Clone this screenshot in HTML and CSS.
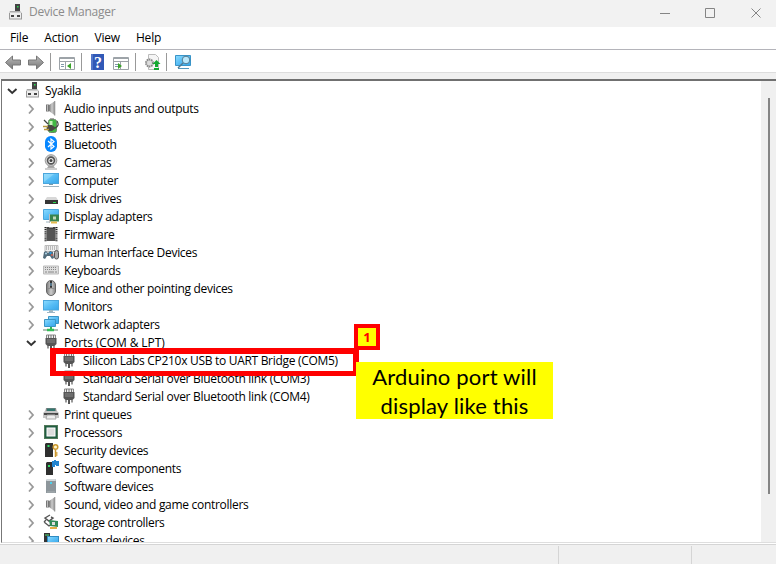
FILE: index.html
```html
<!DOCTYPE html>
<html lang="en">
<head>
<meta charset="utf-8">
<title>Device Manager</title>
<link rel="stylesheet" href="styles.css">
</head>
<body>
<svg class="defs" width="0" height="0" aria-hidden="true">
<defs>
<linearGradient id="blue" x1="0" y1="0" x2="1" y2="1"><stop offset="0" stop-color="#8edcff"/><stop offset=".5" stop-color="#57bdf5"/><stop offset="1" stop-color="#36a6ea"/></linearGradient>
<linearGradient id="metal" x1="0" x2="1"><stop offset="0" stop-color="#777"/><stop offset=".5" stop-color="#ccc"/><stop offset="1" stop-color="#888"/></linearGradient>
<linearGradient id="gray" x1="0" y1="0" x2="0" y2="1"><stop offset="0" stop-color="#bbb"/><stop offset="1" stop-color="#777"/></linearGradient>
<symbol id="right" viewBox="0 0 16 16"><path d="M6 4.500l4 4.500-4 4.500" fill="none" stroke="#999" stroke-width="1.8"/></symbol>
<symbol id="down" viewBox="0 0 16 16"><path d="M4 7l4.200 4L12.500 7" fill="none" stroke="#333" stroke-width="1.900"/></symbol>
<symbol id="pc" viewBox="0 0 16 16"><path d="M8 0h5v9H8z" fill="#444"/><path d="M10 2h1.500v1.500H10z" fill="#2ddb52"/><path d="M3 7h10l2 2H2z" fill="#aaa"/><path d="M2 8.500h13v6.500H2z" fill="#eee"/><path d="M2 15h13M2.500 9v6M14.500 9v6" stroke="#999"/><path d="M4 11h3v2H4zM10 11h3v2h-3z" fill="#444"/></symbol>
<symbol id="sound" viewBox="0 0 16 16"><path d="M3 4.500h3v7H3z" fill="#777"/><path d="M6 5L12 1v14.500L6 11z" fill="url(#metal)"/><path d="M11.800 1v14.500" stroke="#999"/><path d="M4.500 5v6" stroke="#bbb"/></symbol>
<symbol id="battery" viewBox="0 0 16 16"><path d="M7 0h4v2H7z" fill="#aaa"/><rect x="5.500" y="1.500" width="8" height="13" rx="2" fill="#42b944" stroke="#688b65"/><path d="M6.500 3h3v5h-3z" fill="#c9f3bc"/><path d="M1 2l4 4M12 10q5-2 2-7" fill="none" stroke="#3f463f" stroke-width="1.200"/><path d="M5 7h4l4 3-4 3H6c-3 0-3-4-1-6z" fill="#4a4a45"/><path d="M0 8.500h5M1 11.500h5" stroke="#b99a3c" stroke-width="1.400"/></symbol>
<symbol id="bluetooth" viewBox="0 0 16 16"><rect x="2" y="0" width="12" height="16" rx="5.800" fill="#0787ff"/><path d="M5 5l6 5.500L8 13V3l3 2.500L5 11" fill="none" stroke="#fff" stroke-width="1.200"/></symbol>
<symbol id="camera" viewBox="0 0 16 16"><path d="M4 14l2-3h4l2 3z" fill="#aaa"/><path d="M2 15h12" stroke="#999"/><circle cx="8" cy="6.500" r="5.800" fill="#ccc" stroke="#999"/><circle cx="8" cy="6.500" r="3.400" fill="#eee" stroke="#555" stroke-width="1.600"/><circle cx="8" cy="6.500" r="1.500" fill="#444"/></symbol>
<symbol id="computer" viewBox="0 0 16 16"><rect x=".5" y="1.500" width="15" height="10" fill="url(#blue)" stroke="#4ba6dc"/><path d="M1 10L11 2H1z" fill="#a4e2fc" opacity=".5"/><path d="M6 12h4v1H6z" fill="#7699aa"/><path d="M0 14.500h16" stroke="#9eb4c0"/></symbol>
<symbol id="disk" viewBox="0 0 16 16"><path d="M4 7h9l2 3H2z" fill="#d8d8d8"/><path d="M2 10h13v4H2z" fill="#363636"/><path d="M10 12.500h3" stroke="#27d94f"/></symbol>
<symbol id="display" viewBox="0 0 16 16"><path d="M.5 1.500h15v10H.5z" fill="url(#blue)" stroke="#4ba6dc"/><path d="M3 14h4" stroke="#9eb4c0"/><path d="M7 6.500h9v7H7z" fill="#39844e"/><path d="M10 8.500h3v3h-3z" fill="#c1d7b8"/><path d="M8 14.500h6" stroke="#e4ba4d" stroke-width="2"/><path d="M6.500 6v9" stroke="#bbb"/></symbol>
<symbol id="firmware" viewBox="0 0 16 16"><path d="M3.500 1h9v14h-9z" fill="#555"/><path d="M6 0h4v2H6z" fill="#fff"/><path d="M4 2h8" stroke="#333"/><path d="M2.500 1v15M13.500 1v15" stroke="#222" stroke-width="2" stroke-dasharray="1.200 .9"/></symbol>
<symbol id="hid" viewBox="0 0 16 16"><path d="M2 1.500h13v6H2z" fill="#eee" stroke="#bbb"/><path d="M3 3h11M3 5h11" stroke="#888" stroke-dasharray="1 1"/><path d="M0 14l1-6 2-1 2 2 2-2 3 1 1 6-2 1-2-3H4l-2 3z" fill="#526c7c"/><circle cx="3" cy="9.500" r="1" fill="#b5dbed"/><circle cx="7.500" cy="9" r="1" fill="#299eee"/><circle cx="9" cy="11" r="1" fill="#db6450"/><rect x="11.500" y="6.500" width="4" height="8.500" rx="2" fill="#aaa" stroke="#555"/></symbol>
<symbol id="keyboard" viewBox="0 0 16 16"><path d="M.5 4h15v8H.5z" fill="#ddd" stroke="#bbb"/><path d="M2 5.500h12M2 7.500h12" stroke="#888" stroke-dasharray="1 1"/><path d="M2 10h2m1 0h6m1 0h2" stroke="#888"/></symbol>
<symbol id="mouse" viewBox="0 0 16 16"><rect x="3.500" y=".5" width="9" height="15" rx="4.500" fill="url(#metal)" stroke="#666"/><path d="M8 1v7" stroke="#333" stroke-width="2"/><path d="M8 3v3" stroke="#76b7df"/><path d="M4 9q4-2 8 0" fill="none" stroke="#888"/></symbol>
<symbol id="monitor" viewBox="0 0 16 16"><rect x=".5" y="2.500" width="15" height="9.500" fill="url(#blue)" stroke="#4ba6dc"/><path d="M6 12h4v2H6z" fill="#9db6c2"/><path d="M4 14.500h8" stroke="#9bb6c6"/></symbol>
<symbol id="network" viewBox="0 0 16 16"><path d="M5.500.5h10v7h-10z" fill="url(#blue)" stroke="#3b95c5"/><path d="M1.500 3.500h11v7h-11z" fill="url(#blue)" stroke="#3b95c5"/><path d="M7 11h2v3H7z" fill="#34b356"/><path d="M0 14h15" stroke="#b0c1b4" stroke-width="2"/><path d="M4 14h7" stroke="#31bd56" stroke-width="2.500"/></symbol>
<symbol id="port" viewBox="0 0 16 16"><path d="M3.500 1h9v4h-9z" fill="#eee" stroke="#888"/><path d="M5.500 1v3M8 1v3M10.500 1v3" stroke="#777"/><path d="M2.500 4h11v6l-2 2h-7l-2-2z" fill="#555"/><path d="M4 6h8M4 8h8" stroke="#888"/><path d="M5 12v2.500M11 12v2.500" stroke="#777" stroke-width="1.500"/><path d="M8 11v5" stroke="#555" stroke-width="2"/></symbol>
<symbol id="printer" viewBox="0 0 16 16"><path d="M3 2h10l1 5H2z" fill="#888"/><path d="M4 2.500h8v3H4z" fill="#33766e"/><path d="M0 7l2-2h12l2 2v5H0z" fill="#c5c5c5"/><path d="M1 7h14v2H1z" fill="#484848"/><path d="M4 9h8l1 4H3z" fill="#eee" stroke="#aaa"/></symbol>
<symbol id="processor" viewBox="0 0 16 16"><rect x="1" y="1" width="14" height="14" fill="#215d42"/><rect x="1.500" y="1.500" width="13" height="13" fill="none" stroke="#829770" stroke-dasharray="1 1"/><rect x="4" y="4" width="8" height="8" fill="#ddd" stroke="#fff"/></symbol>
<symbol id="security" viewBox="0 0 16 16"><path d="M2 2l1-1h7v14H2z" fill="#2f2f2f"/><path d="M4.500 3h2v2h-2z" fill="#32de66"/><circle cx="12.500" cy="5" r="2.300" fill="#fff4c7" stroke="#cc982f" stroke-width="1.500"/><path d="M12.500 8v7M12.500 11h2M12.500 13h2" stroke="#cc982f" stroke-width="1.500"/></symbol>
<symbol id="component" viewBox="0 0 16 16"><path d="M3 3l1-1h6v13H3z" fill="#2f2f2f"/><path d="M5 5h2v2H5z" fill="#32de66"/><path d="M9 1h2V0h2v1h3v5h-3V5h-1v2H9z" fill="#2384cf"/></symbol>
<symbol id="software" viewBox="0 0 16 16"><path d="M3 2l2-1h7l1 1v13H3z" fill="#8d969b"/><path d="M4 1h8l1 2H3z" fill="#d1d7da"/><path d="M7 4h2v2H7z" fill="#4bd2ef"/><path d="M4 14h8" stroke="#aab0b3"/></symbol>
<symbol id="storage" viewBox="0 0 16 16"><path d="M7 1L2 4l4 3 4-3-2-1M1 8l5 4 3-2M1 8l2-2" fill="none" stroke="#555" stroke-width="1.400"/><path d="M6 6l9 1v6l-8-1z" fill="#318957"/><path d="M9 8h3v3H9z" fill="#ddd"/><path d="M7 14h7" stroke="#e2ad45" stroke-width="2"/></symbol>
<symbol id="system" viewBox="0 0 16 16"><path d="M1 1h6v10H1z" fill="#333"/><path d="M2 3h4" stroke="#55df78"/><rect x="4.500" y="4.500" width="11" height="8" fill="url(#blue)" stroke="#308cc2"/></symbol>
</defs>
</svg>
<div class="window">
<header class="titlebar">
<svg class="app-icon"><use href="#pc"/></svg><h1>Device Manager</h1>
<svg class="controls" viewBox="0 0 110 20"><path d="M4 10.500h10M49.500 5.500h9v9h-9zM95.500 5.500l9 9m0-9l-9 9" fill="none" stroke="#858585"/></svg>
</header>
<nav class="menubar"><span>File</span><span>Action</span><span>View</span><span>Help</span></nav>
<div class="toolbar">
<svg viewBox="0 0 200 22">
<path d="M5.500 12.500l7-6.500v4h8v5h-8v4zM43.500 12.500l-7-6.500v4h-8v5h8v4z" fill="url(#gray)" stroke="#777"/>
<path d="M50.500 3v18M81.500 3v18M135.500 3v18M166.500 3v18" stroke="#999"/>
<g fill="#fff" stroke="#9da3a8"><path d="M59.500 7.500h15v12h-15zM113.500 7.500h15v12h-15z"/><path d="M60 8.500h14M60 11.500h14M114 8.500h14M114 11.500h14M65.500 12v8M120.500 12v8"/></g>
<path d="M61 14.500h3m-3 2h3M115 14.500h4m-4 2h4" stroke="#8098aa"/><path d="M71 13v6l-4-3zM118 13v6l4-3z" fill="#39a329"/>
<path d="M91 4h13v16H91z" fill="#3159b7"/><path d="M92 4v16" stroke="#7996d9"/><text x="98" y="17.500" class="help">?</text>
<path d="M148.500 4.500h7l3 3v12h-10z" fill="#f5f5f5" stroke="#bbb"/><circle cx="149.500" cy="13" r="3.500" fill="#ddd" stroke="#888" stroke-width="2" stroke-dasharray="1.500 .7"/><path d="M156.500 10l4 4h-2.500v3h-3v-3h-2.500zM154 18h5v2h-5z" fill="#13a931"/>
<path d="M175.500 5.500h15v10h-15z" fill="url(#blue)" stroke="#3994c8"/><path d="M178 18.500h11" stroke="#5297bd"/><circle cx="186" cy="10" r="3.800" fill="#b9e7fb" stroke="#537b91"/><path d="M183 13l-5 5" stroke="#537b91" stroke-width="1.500"/>
</svg>
</div>
<main class="content">
<ul class="tree">
<li class="root"><svg><use href="#down"/></svg><svg><use href="#pc"/></svg><span>Syakila</span></li>
<li><svg><use href="#right"/></svg><svg><use href="#sound"/></svg><span>Audio inputs and outputs</span></li>
<li><svg><use href="#right"/></svg><svg><use href="#battery"/></svg><span>Batteries</span></li>
<li><svg><use href="#right"/></svg><svg><use href="#bluetooth"/></svg><span>Bluetooth</span></li>
<li><svg><use href="#right"/></svg><svg><use href="#camera"/></svg><span>Cameras</span></li>
<li><svg><use href="#right"/></svg><svg><use href="#computer"/></svg><span>Computer</span></li>
<li><svg><use href="#right"/></svg><svg><use href="#disk"/></svg><span>Disk drives</span></li>
<li><svg><use href="#right"/></svg><svg><use href="#display"/></svg><span>Display adapters</span></li>
<li><svg><use href="#right"/></svg><svg><use href="#firmware"/></svg><span>Firmware</span></li>
<li><svg><use href="#right"/></svg><svg><use href="#hid"/></svg><span>Human Interface Devices</span></li>
<li><svg><use href="#right"/></svg><svg><use href="#keyboard"/></svg><span>Keyboards</span></li>
<li><svg><use href="#right"/></svg><svg><use href="#mouse"/></svg><span>Mice and other pointing devices</span></li>
<li><svg><use href="#right"/></svg><svg><use href="#monitor"/></svg><span>Monitors</span></li>
<li><svg><use href="#right"/></svg><svg><use href="#network"/></svg><span>Network adapters</span></li>
<li class="ports"><svg><use href="#down"/></svg><svg><use href="#port"/></svg><span>Ports (COM &amp; LPT)</span></li>
<li class="leaf"><svg><use href="#port"/></svg><span>Silicon Labs CP210x USB to UART Bridge (COM5)</span></li>
<li class="leaf"><svg><use href="#port"/></svg><span>Standard Serial over Bluetooth link (COM3)</span></li>
<li class="leaf"><svg><use href="#port"/></svg><span>Standard Serial over Bluetooth link (COM4)</span></li>
<li><svg><use href="#right"/></svg><svg><use href="#printer"/></svg><span>Print queues</span></li>
<li><svg><use href="#right"/></svg><svg><use href="#processor"/></svg><span>Processors</span></li>
<li><svg><use href="#right"/></svg><svg><use href="#security"/></svg><span>Security devices</span></li>
<li><svg><use href="#right"/></svg><svg><use href="#component"/></svg><span>Software components</span></li>
<li><svg><use href="#right"/></svg><svg><use href="#software"/></svg><span>Software devices</span></li>
<li><svg><use href="#right"/></svg><svg><use href="#sound"/></svg><span>Sound, video and game controllers</span></li>
<li><svg><use href="#right"/></svg><svg><use href="#storage"/></svg><span>Storage controllers</span></li>
<li><svg><use href="#right"/></svg><svg><use href="#system"/></svg><span>System devices</span></li>
</ul>
<div class="scrollbar"><div class="thumb"></div></div>
</main>
<footer class="statusbar"><span></span><span></span><span></span></footer>
<div class="highlight"></div>
<div class="badge">1</div>
<div class="note"><span>Arduino port will</span><span>display like this</span></div>
</div>
</body>
</html>
```
FILE: styles.css
```css
* { box-sizing: border-box; }
body { margin: 0; font: 12px/18px "Open Sans", "Noto Sans", sans-serif; color: #000; }
svg { display: block; flex: none; }
.defs { position: absolute; }
.window { position: relative; display: flex; flex-direction: column; width: 776px; height: 564px; overflow: hidden; background: #fff; }
.titlebar { display: flex; align-items: center; height: 27px; padding: 0 10px 4px 7px; background: #f2f2f2; color: #8b8b8b; }
.app-icon { width: 16px; height: 16px; margin-right: 6px; }
h1 { flex: 1; margin: 0; font-size: 12px; font-weight: 400; line-height: 23px; letter-spacing: -.23px; }
.controls { width: 110px; height: 20px; margin-top: 2px; }
.menubar { display: flex; gap: 16px; height: 23px; padding: 2px 10px; border-bottom: 1px solid #b4b4ba; letter-spacing: -.18px; }
.toolbar { height: 29px; background: linear-gradient(#fff 0 22px, #ddd 22px 23px, #f0f0f0 23px); }
.toolbar svg { width: 200px; height: 22px; }
.help { font: bold 16px "Liberation Serif", serif; fill: #fff; text-anchor: middle; }
.content { display: flex; height: 465px; border-top: 2px solid #707070; border-left: 1px solid #777; border-bottom: 1px solid #dedede; overflow: hidden; margin-left: 1px; }
.tree { flex: 1; list-style: none; margin: 0; padding: 0; }
.tree li { display: flex; align-items: center; height: 18px; padding-left: 21px; white-space: nowrap; letter-spacing: -.3px; }
.tree li.root { padding-left: 2px; }
.tree li.leaf { padding-left: 59px; }
.tree li.ports { letter-spacing: -.1px; }
.tree svg { width: 16px; height: 16px; }
.tree svg + svg { margin-left: 4px; }
.tree span { margin-left: 5px; padding-top: 2px; line-height: 18px; }
.tree .leaf span { margin-left: 6px; }
.scrollbar { width: 15px; padding: 17px 0 0 7px; background: #f0f0f0; }
.thumb { width: 2px; height: 396px; background: #858585; }
.statusbar { display: flex; height: 20px; margin-top: 1px; border-top: 1px solid #d5d5d5; background: #f0f0f0; padding-top: 1px; }
.statusbar span { border-right: 1px solid #d5d5d5; }
.statusbar span:nth-child(1) { width: 559px; }
.statusbar span:nth-child(2) { width: 133px; }
.statusbar span:nth-child(3) { border: 0; }
.highlight { position: absolute; left: 50px; top: 348px; width: 309px; height: 28px; border: 6px solid #f00; border-bottom-width: 5px; }
.badge { position: absolute; left: 354px; top: 324px; width: 26px; height: 26px; border: 4px solid #f00; background: #ff0; color: #f00; font: bold 13px/18px "Open Sans", sans-serif; text-align: center; }
.note { position: absolute; left: 356px; top: 362px; width: 197px; height: 57px; display: flex; flex-direction: column; align-items: center; background: #ff0; font: 22px/29px Lato, sans-serif; letter-spacing: .18px; white-space: nowrap; }
```
